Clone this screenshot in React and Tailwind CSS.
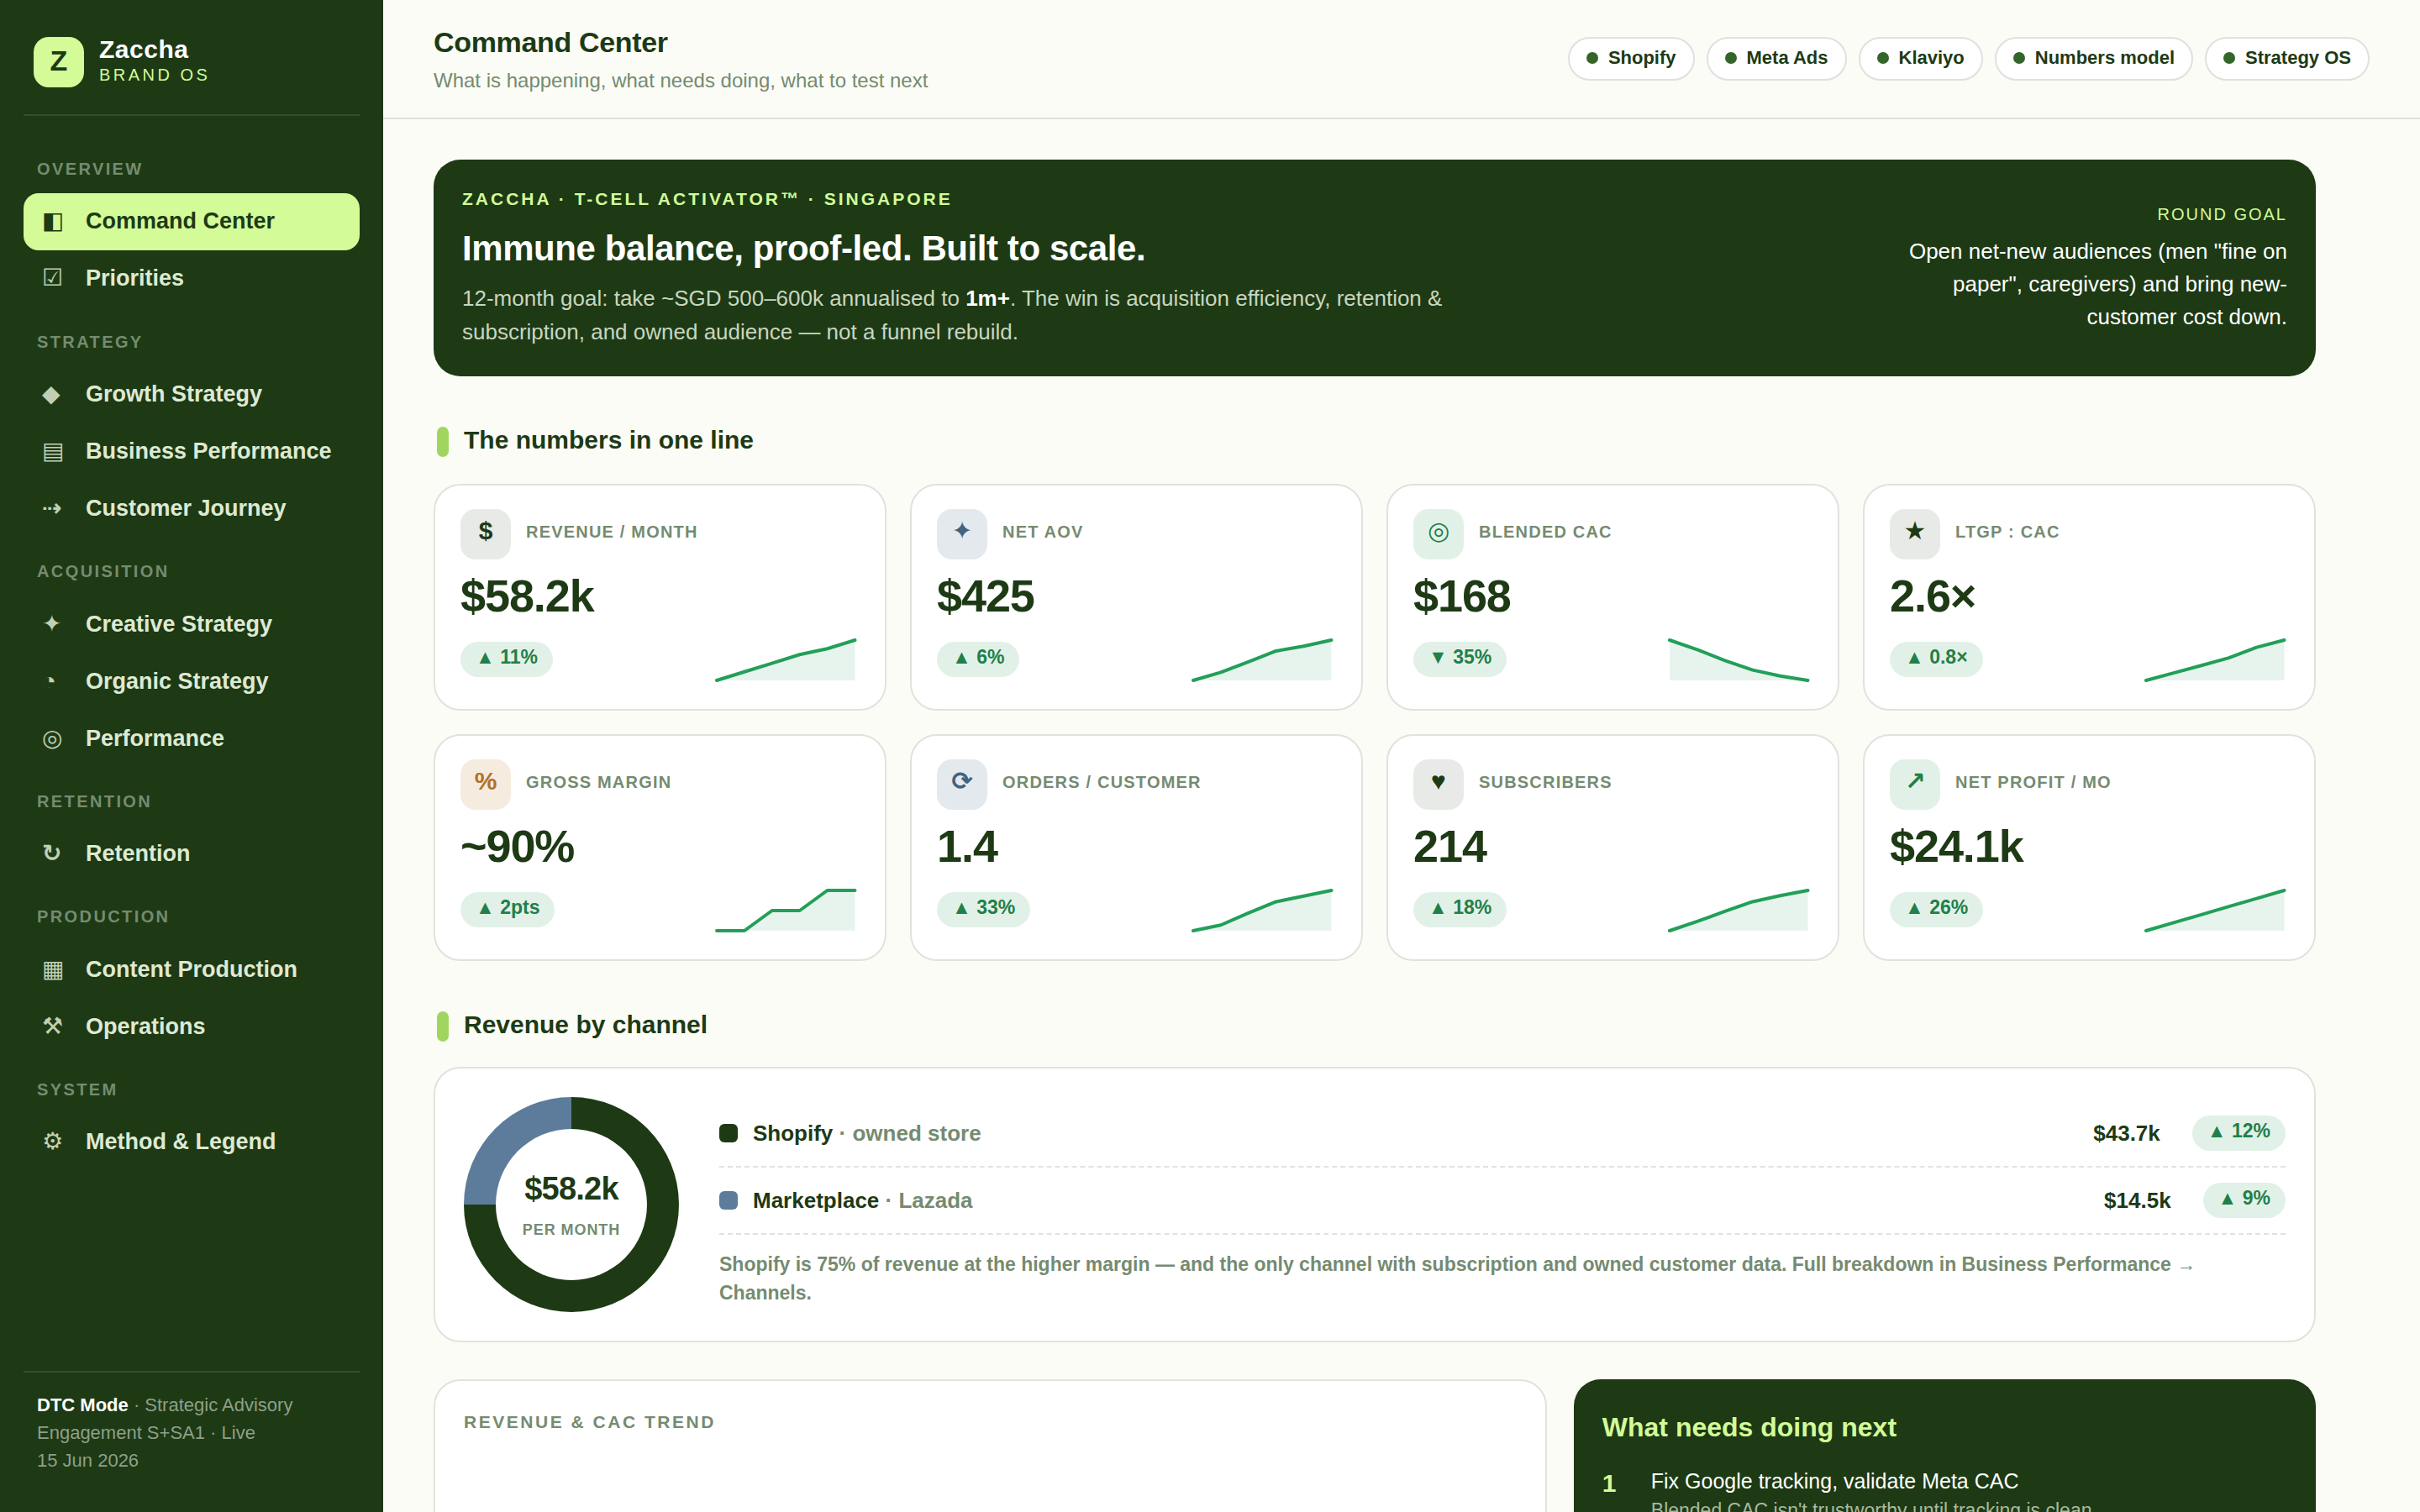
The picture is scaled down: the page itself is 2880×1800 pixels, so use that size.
const navGroups = [
  { label: 'OVERVIEW', items: [['◧', 'Command Center', true], ['☑', 'Priorities']] },
  { label: 'STRATEGY', items: [['◆', 'Growth Strategy'], ['▤', 'Business Performance'], ['⇢', 'Customer Journey']] },
  { label: 'ACQUISITION', items: [['✦', 'Creative Strategy'], ['◔', 'Organic Strategy'], ['◎', 'Performance']] },
  { label: 'RETENTION', items: [['↻', 'Retention']] },
  { label: 'PRODUCTION', items: [['▦', 'Content Production'], ['⚒', 'Operations']] },
  { label: 'SYSTEM', items: [['⚙', 'Method & Legend']] },
];

const sources = ['Shopify', 'Meta Ads', 'Klaviyo', 'Numbers model', 'Strategy OS'];

const tones = {
  dark: 'bg-[#e8eae7] text-[#1d3a15]',
  blue: 'bg-[#e4e9ee] text-[#43627f]',
  green: 'bg-[#e2f1e8] text-[#1f8049]',
  amber: 'bg-[#f6ebdf] text-[#b07028]',
};

const kpis = [
  { icon: '$', tone: 'dark', label: 'REVENUE / MONTH', value: '$58.2k', delta: '▲ 11%', trend: [0, 0.213, 0.426, 0.64, 0.786, 1] },
  { icon: '✦', tone: 'blue', label: 'NET AOV', value: '$425', delta: '▲ 6%', trend: [0, 0.2, 0.46, 0.73, 0.85, 1] },
  { icon: '◎', tone: 'green', label: 'BLENDED CAC', value: '$168', delta: '▼ 35%', trend: [1, 0.765, 0.49, 0.257, 0.11, 0] },
  { icon: '★', tone: 'dark', label: 'LTGP : CAC', value: '2.6×', delta: '▲ 0.8×', trend: [0, 0.185, 0.37, 0.56, 0.82, 1] },
  { icon: '%', tone: 'amber', label: 'GROSS MARGIN', value: '~90%', delta: '▲ 2pts', trend: [0, 0, 0.5, 0.5, 1, 1] },
  { icon: '⟳', tone: 'blue', label: 'ORDERS / CUSTOMER', value: '1.4', delta: '▲ 33%', trend: [0, 0.14, 0.44, 0.72, 0.86, 1] },
  { icon: '♥', tone: 'dark', label: 'SUBSCRIBERS', value: '214', delta: '▲ 18%', trend: [0, 0.23, 0.48, 0.72, 0.87, 1] },
  { icon: '↗', tone: 'green', label: 'NET PROFIT / MO', value: '$24.1k', delta: '▲ 26%', trend: [0, 0.2, 0.4, 0.6, 0.8, 1] },
];

const channels = [
  { name: 'Shopify', note: 'owned store', swatch: 'bg-[#1d3a15]', amount: '$43.7k', delta: '▲ 12%' },
  { name: 'Marketplace', note: 'Lazada', swatch: 'bg-[#5d7c9b]', amount: '$14.5k', delta: '▲ 9%' },
];

function Sidebar() {
  return (
    <aside className="flex h-full w-[456px] shrink-0 flex-col bg-[#1d3a15] px-[28px]">
      <div className="flex h-[138px] items-start gap-[18px] border-b-2 border-[#34502b] pt-[44px] pl-[12px]">
        <div className="flex h-[60px] w-[60px] items-center justify-center rounded-[18px] bg-[#d3fb98] pb-[4px] text-[34px] leading-[40px] font-bold text-[#1d3a15]">
          Z
        </div>
        <div>
          <div className="-mt-[2px] text-[30px] leading-[34px] font-bold tracking-[0.5px] text-white">Zaccha</div>
          <div className="pt-px text-[20px] leading-[24px] tracking-[3.5px] text-[#d3fb98]">BRAND OS</div>
        </div>
      </div>
      <nav className="pt-[22.4px]">
        {navGroups.map((group) => (
          <div key={group.label}>
            <div className="h-[69.6px] pt-[28.6px] pl-[16px] text-[20px] leading-[24px] font-bold tracking-[2.4px] text-[#768b6f]">
              {group.label}
            </div>
            {group.items.map(([icon, label, active]) => (
              <div
                key={label}
                className={
                  active
                    ? 'flex h-[68px] items-center rounded-[18px] bg-[#d3fb98] pb-px pl-[22px] text-[#1d3a15]'
                    : 'flex h-[68px] items-center rounded-[18px] pb-px pl-[22px] text-[#dfe9d3]'
                }
              >
                <span className={active ? 'w-[52px] text-[28px] leading-[32px] font-bold' : 'w-[52px] text-[28px] leading-[32px] font-bold opacity-85'}>
                  {icon}
                </span>
                <span className="text-[27px] leading-[32px] font-bold">{label}</span>
              </div>
            ))}
          </div>
        ))}
      </nav>
      <div className="mt-auto h-[168px] border-t-2 border-[#34502b] pt-[22px] pl-[16px] text-[22px] leading-[33px] text-[#8e9f87]">
        <div><b className="text-white">DTC Mode</b> · Strategic Advisory</div>
        <div>Engagement S+SA1 · Live</div>
        <div>15 Jun 2026</div>
      </div>
    </aside>
  );
}

function Header() {
  return (
    <header className="flex h-[142px] items-start justify-between border-b-2 border-[#dfe1da] pr-[60px] pl-[60px]">
      <div className="pt-[30px]">
        <h1 className="text-[34px] leading-[40px] font-bold tracking-[-0.34px]">Command Center</h1>
        <p className="pt-[12px] text-[24px] leading-[28px] text-[#758b70]">What is happening, what needs doing, what to test next</p>
      </div>
      <div className="flex gap-[14px] pt-[44px]">
        {sources.map((name) => (
          <div key={name} className="flex h-[52px] items-center gap-[12px] rounded-full border-2 border-[#dfe1dd] bg-white px-[20px] pb-[2px] text-[22px] leading-[26px] font-bold">
            <span className="h-[14px] w-[14px] rounded-full bg-[#34652b]" />
            {name}
          </div>
        ))}
      </div>
    </header>
  );
}

function Hero() {
  return (
    <section className="flex h-[258px] justify-between rounded-[32px] bg-[#1d3a15] px-[34px] text-white">
      <div className="w-[1240px] pt-[35px]">
        <div className="text-[21px] leading-[24px] font-bold tracking-[3.01px] text-[#d3fb98]">ZACCHA · T-CELL ACTIVATOR™ · SINGAPORE</div>
        <h2 className="pt-[23px] text-[42px] leading-[48px] font-bold tracking-[-0.42px]">Immune balance, proof-led. Built to scale.</h2>
        <p className="pt-[15px] text-[26px] leading-[40px] text-[#c9d5bf]">
          12-month goal: take ~SGD 500–600k annualised to <b className="text-white">1m+</b>. The win is acquisition efficiency, retention &amp; subscription, and owned audience — not a funnel rebuild.
        </p>
      </div>
      <div className="w-[460px] pt-[53px] text-right">
        <div className="text-[20px] leading-[24px] tracking-[2px] text-[#d3fb98]">ROUND GOAL</div>
        <p className="pt-[13px] text-[26px] leading-[39px]">
          Open net-new audiences (men "fine on paper", caregivers) and bring new-customer cost down.
        </p>
      </div>
    </section>
  );
}

function SectionTitle({ children }) {
  return (
    <h3 className="flex h-[36px] items-start gap-[18px] pl-[4px] text-[30px] leading-[32px] font-bold">
      <span className="h-[36px] w-[14px] rounded-[7px] bg-[#a0d65f]" />
      <span>{children}</span>
    </h3>
  );
}

function Delta({ children }) {
  return (
    <span className="block h-[42px] rounded-full bg-[#e2f1e8] px-[18px] pt-[5px] text-[23px] leading-[26px] font-bold whitespace-nowrap text-[#1f8049]">
      {children}
    </span>
  );
}

function Sparkline({ trend }) {
  const line = trend.map((v, i) => `${2 + i * 32.9},${52 - v * 48}`).join(' ');
  return (
    <svg width="172" height="56" viewBox="0 0 172 56" fill="none">
      <polygon points={`2,52 ${line} 166.5,52`} fill="#e7f4ed" />
      <polyline points={line} stroke="#229f58" strokeWidth="4" strokeLinecap="round" strokeLinejoin="round" />
    </svg>
  );
}

function KpiCard({ icon, tone, label, value, delta, trend }) {
  return (
    <div className="h-[270px] rounded-[32px] border-2 border-[#dfe3dd] bg-white px-[30px] pt-[28px]">
      <div className="flex items-center gap-[18px]">
        <span className={`flex h-[60px] w-[60px] items-center justify-center rounded-[18px] pb-[8px] text-[30px] leading-[34px] font-bold ${tones[tone]}`}>
          {icon}
        </span>
        <span className="pb-[6px] text-[20px] leading-[24px] font-bold tracking-[1.2px] text-[#758b70]">{label}</span>
      </div>
      <div className="pt-[13px] text-[54px] leading-[60px] font-bold tracking-[-1.08px]">{value}</div>
      <div className="flex items-start justify-between pt-[19px]">
        <div className="pt-[6px]"><Delta>{delta}</Delta></div>
        <Sparkline trend={trend} />
      </div>
    </div>
  );
}

function ChannelCard() {
  return (
    <section className="flex h-[328px] items-center gap-[48px] rounded-[32px] border-2 border-[#dfe3dd] bg-white px-[34px]">
      <div className="flex h-[256px] w-[256px] shrink-0 items-center justify-center rounded-full bg-[conic-gradient(#1d3a15_0_75%,#5d7c9b_75%_100%)]">
        <div className="flex h-[180px] w-[180px] flex-col items-center rounded-full bg-white pt-[49px]">
          <div className="text-[38px] leading-[44px] font-bold tracking-[-0.76px]">$58.2k</div>
          <div className="pt-[15px] text-[18px] leading-[24px] font-bold tracking-[0.95px] text-[#758b70]">PER MONTH</div>
        </div>
      </div>
      <div className="h-[248px] flex-1">
        {channels.map((c) => (
          <div key={c.name} className="flex h-[80px] items-center border-b-2 border-dashed border-[#dfe3dd] text-[26px] leading-[32px] font-bold">
            <span className={`mr-[18px] h-[22px] w-[22px] rounded-[6px] ${c.swatch}`} />
            <span>
              {c.name} <span className="text-[#758b70]">· {c.note}</span>
            </span>
            <span className="mr-[38px] ml-auto">{c.amount}</span>
            <Delta>{c.delta}</Delta>
          </div>
        ))}
        <p className="pt-[18px] text-[23px] leading-[34px] font-bold text-[#758b70]">
          Shopify is 75% of revenue at the higher margin — and the only channel with subscription and owned customer data. Full breakdown in Business Performance → Channels.
        </p>
      </div>
    </section>
  );
}

export default function App() {
  return (
    <div className="flex h-[1800px] w-[2880px] overflow-hidden bg-[#fbfcf6] font-['Liberation_Sans','DejaVu_Sans',sans-serif] text-[#1d3a15]">
      <Sidebar />
      <div className="flex-1">
        <Header />
        <main className="ml-[60px] w-[2240px] pt-[48px]">
          <Hero />
          <div className="pt-[60px]"><SectionTitle>The numbers in one line</SectionTitle></div>
          <div className="grid grid-cols-4 gap-[28px] pt-[32px]">
            {kpis.map((k) => <KpiCard key={k.label} {...k} />)}
          </div>
          <div className="pt-[60px] pb-[30px]"><SectionTitle>Revenue by channel</SectionTitle></div>
          <ChannelCard />
          <div className="grid grid-cols-[1.5fr_1fr] gap-[32px] pt-[44px]">
            <div className="h-[400px] rounded-[32px] border-2 border-[#dfe3dd] bg-white px-[34px] pt-[36px]">
              <div className="text-[21px] leading-[26px] font-bold tracking-[2.52px] text-[#758b70]">REVENUE &amp; CAC TREND</div>
            </div>
            <div className="h-[400px] rounded-[32px] bg-[#1d3a15] px-[34px] pt-[37px] text-white">
              <h3 className="text-[32px] leading-[40px] font-bold text-[#d3fb98]">What needs doing next</h3>
              <div className="flex pt-[27px]">
                <span className="w-[58px] text-[30px] leading-[39px] font-bold text-[#d3fb98]">1</span>
                <div>
                  <div className="text-[25px] leading-[34px]">Fix Google tracking, validate Meta CAC</div>
                  <div className="pt-[2px] text-[23px] leading-[32px] text-[#a9b99f]">Blended CAC isn't trustworthy until tracking is clean</div>
                </div>
              </div>
            </div>
          </div>
        </main>
      </div>
    </div>
  );
}
